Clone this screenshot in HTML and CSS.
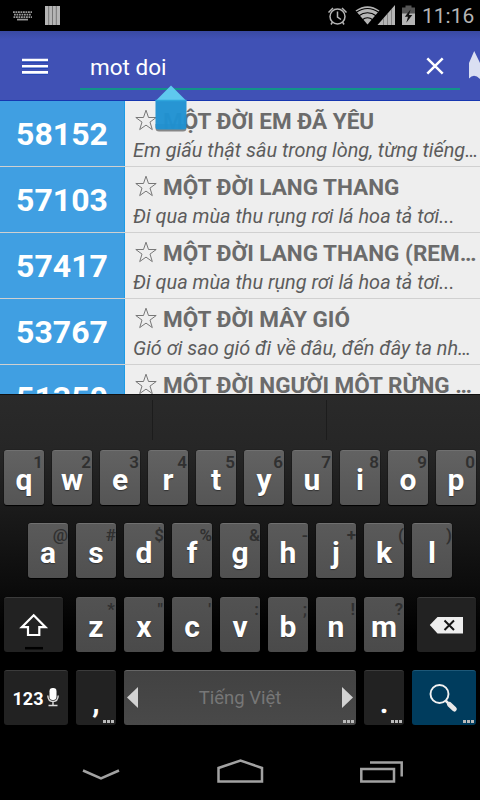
FILE: index.html
```html
<!DOCTYPE html>
<html lang="vi">
<head>
<meta charset="utf-8">
<title>Karaoke</title>
<link rel="stylesheet" href="styles.css">
</head>
<body>
<svg class="defs" width="0" height="0">
  <symbol id="star" viewBox="0 0 22 22"><path d="M11 1.2 13.5 8.5H21.2L15 13.1 17.3 20.6 11 16.1 4.7 20.6 7 13.1.8 8.5H8.5Z" fill="none" stroke="#777" stroke-width="1"/></symbol>
</svg>
<div class="screen">
  <header class="status">
    <svg class="st-left" width="64" height="31" viewBox="0 0 64 31">
      <g fill="none" stroke="#999" stroke-width="1.7"><path d="M13 12.2H32" stroke-dasharray="1.8 .7"/><path d="M14 14.7H31.5" stroke-dasharray="1.8 .7"/><path d="M13.5 17.1H32" stroke-dasharray="1.8 .7"/><path d="M17 19.6H28"/></g>
      <path d="M45 6H60V25H45Z" fill="#b5b5b5"/><path d="M48.700 6V25M52.500 6V25M56.300 6V25" stroke="#666" stroke-width=".8"/>
    </svg>
    <svg class="st-right" width="95" height="31" viewBox="326 0 95 31">
      <g fill="none" stroke="#b5b5b5" stroke-width="1.5"><circle cx="337.500" cy="16.500" r="7.500"/><path d="M337.500 11.500V17L341 19.500M328.500 12.500 333 8M346.500 12.500 342 8M332.500 22 331 24.500M342.500 22 344 24.500"/></g>
      <path d="M367.500 24.500 355.500 10.500Q367.500 2 379.500 10.500Z" fill="#b5b5b5"/>
      <path d="M356 12.500Q367.500 4.500 379 12.500M358.500 16Q367.500 9.500 376.500 16M362 20Q367.500 15.500 373 20" fill="none" stroke="#000" stroke-width="1.100"/>
      <path d="M395 5V25H377.500Z" fill="#b5b5b5"/>
      <path d="M383.500 18V25M387.500 14V25M391.500 9V25" stroke="#777" stroke-width=".8"/>
      <path d="M402 7.500h3.500V5.500h6v2H415V14H402Z" fill="#555"/>
      <path d="M402 13.500H415V25H402Z" fill="#b5b5b5"/>
      <path d="M410.500 9.500 404.800 16.800H408L406.300 22.800 412.300 15H409Z" fill="#111"/>
    </svg>
    <span class="clock">11:16</span>
  </header>

  <div class="appbar">
    <svg class="menu" width="26" height="17" viewBox="0 0 26 17"><path d="M0 4h26M0 10h26M0 16h26" stroke="#0b3bb4" stroke-width="1"/><path d="M0 2h26M0 8.200h26M0 14.400h26" stroke="#fff" stroke-width="2.600"/></svg>
    <div class="search">
      <span class="query">mot doi</span>
      <svg width="18" height="18" viewBox="0 0 18 18"><path d="M1.300 1.300 16.700 16.700M16.700 1.300 1.300 16.700" stroke="#fff" stroke-width="2.500"/></svg>
    </div>
    <svg class="mic" width="11" height="28" viewBox="0 0 11 28"><path d="M0 12 5.200 0 11 12V28Q5 22 0 27.500Z" fill="#dadff2"/></svg>
    <svg class="handle" width="36" height="50" viewBox="0 0 36 50">
      <path d="M2.500 40H33.500V44Q33.500 47.500 30 47.500H6Q2.500 47.500 2.500 44Z" fill="#333" opacity=".55"/>
      <path d="M2.500 17 18 1.500 33.500 17Z" fill="#5fc8ef"/>
      <path d="M2.500 16.500H33.500V43Q33.500 45.500 31 45.500H5Q2.500 45.500 2.500 43Z" fill="#2092d2" opacity=".97"/>
      <path d="M2.500 16.500H33.500" stroke="#2fa6dc" stroke-width="1.500"/>
    </svg>
  </div>

  <main class="songs">
    <article class="song"><div class="num">58152</div><div class="info"><h2><svg class="star"><use href="#star"/></svg><span>MỘT ĐỜI EM ĐÃ YÊU</span></h2><p>Em giấu thật sâu trong lòng, từng tiếng…</p></div></article>
    <article class="song"><div class="num">57103</div><div class="info"><h2><svg class="star"><use href="#star"/></svg><span>MỘT ĐỜI LANG THANG</span></h2><p>Đi qua mùa thu rụng rơi lá hoa tả tơi...</p></div></article>
    <article class="song"><div class="num">57417</div><div class="info"><h2><svg class="star"><use href="#star"/></svg><span>MỘT ĐỜI LANG THANG (REM…</span></h2><p>Đi qua mùa thu rụng rơi lá hoa tả tơi...</p></div></article>
    <article class="song"><div class="num">53767</div><div class="info"><h2><svg class="star"><use href="#star"/></svg><span>MỘT ĐỜI MÂY GIÓ</span></h2><p>Gió ơi sao gió đi về đâu, đến đây ta nh…</p></div></article>
    <article class="song"><div class="num">51350</div><div class="info"><h2><svg class="star"><use href="#star"/></svg><span>MỘT ĐỜI NGƯỜI MỘT RỪNG …</span></h2></div></article>
  </main>

  <section class="keyboard">
    <div class="suggest"><i></i><i></i><i></i></div>
    <div class="row r1">
      <div class="key"><b>q</b><small>1</small></div><div class="key"><b>w</b><small>2</small></div><div class="key"><b>e</b><small>3</small></div><div class="key"><b>r</b><small>4</small></div><div class="key"><b>t</b><small>5</small></div><div class="key"><b>y</b><small>6</small></div><div class="key"><b>u</b><small>7</small></div><div class="key"><b>i</b><small>8</small></div><div class="key"><b>o</b><small>9</small></div><div class="key"><b>p</b><small>0</small></div>
    </div>
    <div class="row r2">
      <div class="key"><b>a</b><small>@</small></div><div class="key"><b>s</b><small>#</small></div><div class="key"><b>d</b><small>$</small></div><div class="key"><b>f</b><small>%</small></div><div class="key"><b>g</b><small>&amp;</small></div><div class="key"><b>h</b><small>-</small></div><div class="key"><b>j</b><small>+</small></div><div class="key"><b>k</b><small>(</small></div><div class="key"><b>l</b><small>)</small></div>
    </div>
    <div class="row r3">
      <div class="key dark shift"><svg width="59" height="55" viewBox="0 0 59 55"><path d="M29.700 18.200 41.500 30.200H35.300V38H24V30.200H17.800Z" fill="none" stroke="#fff" stroke-width="2.200"/><path d="M21 51.200H39" stroke="#000" stroke-width="2.500"/></svg></div>
      <div class="key"><b>z</b><small>*</small></div><div class="key"><b>x</b><small>"</small></div><div class="key"><b>c</b><small>'</small></div><div class="key"><b>v</b><small>:</small></div><div class="key"><b>b</b><small>;</small></div><div class="key"><b>n</b><small>!</small></div><div class="key"><b>m</b><small>?</small></div>
      <div class="key dark back"><svg width="59" height="55" viewBox="0 0 59 55"><path d="M12.800 28 20.500 20H46V36.500H20.500Z" fill="#eee"/><path d="M27.500 23.500 37 33M37 23.500 27.500 33" stroke="#161616" stroke-width="2"/></svg></div>
    </div>
    <div class="row r4">
      <div class="key dark sym"><span>123</span><svg width="12" height="19" viewBox="0 0 12 19"><rect x="2.500" y="0" width="7" height="12" rx="3.200" fill="#fff"/><path d="M.8 7.500Q1 13.500 6 13.500T11.200 7.500M6 13V17M1.500 17.500H10.500" fill="none" stroke="#ddd" stroke-width="1.400"/></svg></div>
      <div class="key dark"><b>,</b><em></em></div>
      <div class="key space"><svg width="11" height="21" viewBox="0 0 11 21"><path d="M11 0V21L0 10.500Z" fill="#d2d2d2"/></svg><span>Tiếng Việt</span><svg width="11" height="21" viewBox="0 0 11 21"><path d="M0 0V21L11 10.500Z" fill="#d2d2d2"/></svg><em></em></div>
      <div class="key dark"><b>.</b><em></em></div>
      <div class="key find"><svg width="64" height="55" viewBox="0 0 64 55"><circle cx="27.500" cy="24" r="9" fill="none" stroke="#f2f2f2" stroke-width="1.900"/><path d="M33.500 30.500 36.500 33.500" stroke="#eee" stroke-width="2.500"/><path d="M37.500 34.500 42.300 39" stroke="#e8e8e8" stroke-width="5" stroke-linecap="round"/></svg><em></em></div>
    </div>
  </section>

  <nav class="navbar">
    <svg width="480" height="75" viewBox="0 725 480 75" fill="none" stroke="#a2a2a2" stroke-width="2.500"><path d="M83 770.500 101 778.500 119 770.500"/><path d="M218.500 781.500V768L240.500 760.500 262 768V781.500Z"/><path d="M361.300 769H394V781.500H361.300ZM370 762.500H401.700V776.500"/></svg>
  </nav>
</div>
</body>
</html>
```

FILE: styles.css
```css
* { box-sizing: border-box; }
body { margin: 0; background: #000; font-family: Roboto, "Noto Sans", sans-serif; }
.defs { position: absolute; }
svg { display: block; flex: none; }
.screen { width: 480px; height: 800px; display: flex; flex-direction: column; overflow: hidden; }

.status { height: 31px; flex: none; display: flex; background: #000; }
.st-right { margin-left: 262px; }
.clock { color: #b5b5b5; font-size: 21px; line-height: 32px; margin-left: 1px; white-space: nowrap; }

.appbar { height: 70px; flex: none; display: flex; position: relative; background: linear-gradient(#3949a2, #4051b5 8px); border-bottom: 1px solid #1737b0; }
.menu { margin: 27px 0 0 22px; }
.search { width: 380px; height: 59px; margin-left: 32px; padding: 12px 16px 0 10px; display: flex; align-items: center; justify-content: space-between; border-bottom: 2px solid #12938a; }
.query { color: #fff; font-size: 22.5px; line-height: 26px; padding-top: 3px; }
.mic { margin: 20px 0 0 9px; }
.handle { position: absolute; left: 152.5px; top: 53px; z-index: 2; }

.songs { height: 293px; flex: none; overflow: hidden; background: #eee; }
.song { height: 66px; display: flex; border-bottom: 1px solid #d0d0d0; }
.num { width: 125px; flex: none; background: #409fe2; border-right: 1px solid #1d9be5; color: #fff; font-size: 32px; font-weight: 700; line-height: 67px; text-align: center; }
.info { flex: 1; min-width: 0; padding-left: 8px; white-space: nowrap; color: #6b6b6b; }
h2 { margin: 0; height: 37px; display: flex; align-items: flex-start; font-size: 22.5px; font-weight: 700; line-height: 40px; }
.star { width: 22px; height: 22px; margin: 8px 6px 0 2px; }
p { margin: 0; font-size: 19.9px; line-height: 25px; font-style: italic; color: #5c5c5c; }

.keyboard { height: 331px; flex: none; background: linear-gradient(#2a2a2a 0, #262626 55px, #0c0c0c 190px, #000 240px); border-top: 1px solid #111; }
.suggest { height: 55px; display: flex; padding: 5px 0 10px; }
.suggest i { width: 153px; border-right: 1px solid #1c1c1c; }
.suggest i:nth-child(2) { width: 174px; }
.suggest i:last-child { border: 0; }
.row { display: flex; gap: 8px; height: 55px; padding: 0 4px; margin-bottom: 18px; }
.r2 { padding-left: 28px; margin-bottom: 19px; }
.key { position: relative; width: 40px; height: 55px; flex: none; border-radius: 3px; background: linear-gradient(#626262, #555); border-top: 1px solid #707070; box-shadow: 0 1px 1px #000, 0 0 1px #000; display: flex; justify-content: center; }
.r2 .key { background: linear-gradient(#5a5a5a, #505050); }
.r3 .key { background: linear-gradient(#525252, #4a4a4a); border-top-color: #5c5c5c; }
.key b { color: #fff; font-size: 30px; line-height: 57px; text-shadow: 0 1px 1px #333; }
.key small { position: absolute; right: 1px; top: 0; font-size: 17px; line-height: 22px; font-weight: 600; color: #303030; }
.r2 small { right: 0; }
.row .dark { background: #222; border-top-color: #3b3b3b; }
.key > svg { margin-top: -1px; }
.shift { width: 59px; margin-right: 5px; }
.back { width: 59px; margin-left: 5px; }
.sym { width: 64px; align-items: center; gap: 4px; color: #fff; font-size: 18px; font-weight: 700; }
.space { width: 232px; align-items: center; justify-content: space-between; padding: 0 3px; background: linear-gradient(#424242, #494949); border-top-color: #656565; }
.space span { color: #777; font-size: 18.5px; }
.find { width: 64px; background: #003c5d; border-top-color: #1d5878; }
.r4 b { line-height: 64px; }
.key em { position: absolute; right: 2px; bottom: 2px; width: 11px; height: 3px; background: repeating-linear-gradient(90deg, #bbb 0 3px, transparent 3px 4px); }
.navbar { height: 75px; flex: none; background: #000; }
```
